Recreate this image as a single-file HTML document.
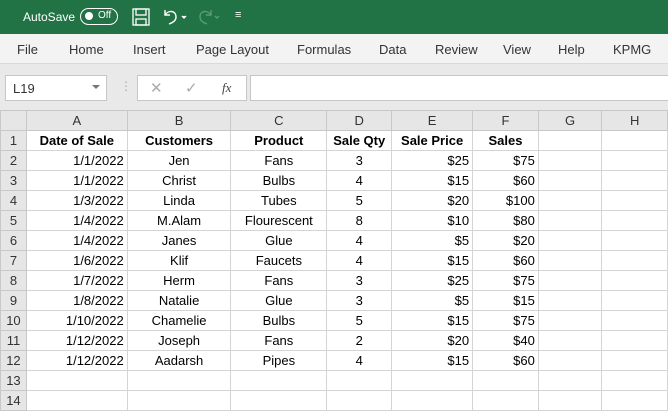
<!DOCTYPE html>
<html><head><style>
*{margin:0;padding:0;box-sizing:border-box}
body{width:668px;height:411px;overflow:hidden;font-family:"Liberation Sans",Arial,sans-serif;background:#fff;position:relative}
.green{position:absolute;left:0;top:0;width:668px;height:34px;background:#217346;color:#fff}
.rib{position:absolute;left:0;top:34px;width:668px;height:30px;background:#f3f3f3;border-bottom:1px solid #dadada;font-size:13px;color:#333}
.rib span{position:absolute;top:8px}
.fb{position:absolute;left:0;top:64px;width:668px;height:46px;background:#e9e9e9}
.box{position:absolute;background:#fff;border:1px solid #c6c6c6}
table{position:absolute;left:0;top:110px;border-collapse:collapse;font-size:13px;table-layout:fixed}
td{height:20px;border:1px solid #d4d4d4;padding:0 3px;white-space:nowrap;overflow:hidden;color:#000}
tr.h td{background:#e6e6e6;text-align:center;color:#333;border-color:#c8c8c8}
td.r{background:#e6e6e6;color:#333;text-align:center;padding:0;border-color:#c8c8c8}
.c{text-align:center}.R{text-align:right}.b{font-weight:bold;text-align:center}
</style></head><body>
<div class="green">
<span style="position:absolute;left:23px;top:10px;font-size:12px">AutoSave</span>
<div style="position:absolute;left:80px;top:8px;width:38px;height:17px;border:1.5px solid #fff;border-radius:9px"><div style="position:absolute;left:4px;top:3px;width:8px;height:8px;border-radius:50%;background:#fff"></div><span style="position:absolute;left:17px;top:1px;font-size:10px">Off</span></div>
<svg style="position:absolute;left:132px;top:8px" width="18" height="18" viewBox="0 0 18 18" fill="none" stroke="#fff" stroke-width="1.3"><rect x="1" y="1" width="16" height="16"/><rect x="4" y="1" width="10" height="6"/><rect x="4" y="11" width="10" height="6"/></svg>
<svg style="position:absolute;left:162px;top:8px" width="26" height="18" viewBox="0 0 26 18" fill="none" stroke="#fff" stroke-width="1.4"><path d="M3 2v5h5M3 7c3-5 11-5 11 2c0 4-4 6-7 7"/><path d="M20 8l2 2l2-2" fill="#fff"/></svg>
<svg style="position:absolute;left:197px;top:8px" width="26" height="18" viewBox="0 0 26 18" fill="none" stroke="#5a9a78" stroke-width="1.4"><path d="M14 2v5h-5M14 7c-3-5-11-5-11 2c0 4 4 6 7 7"/><path d="M18 8l2 2l2-2"/></svg>
<span style="position:absolute;left:235px;top:9px;font-size:11px">&#8801;</span>
</div>
<div class="rib">
<span style="left:17px">File</span><span style="left:69px">Home</span><span style="left:133px">Insert</span><span style="left:196px">Page Layout</span><span style="left:297px">Formulas</span><span style="left:379px">Data</span><span style="left:435px">Review</span><span style="left:503px">View</span><span style="left:558px">Help</span><span style="left:613px">KPMG</span>
</div>
<div class="fb">
<div class="box" style="left:5px;top:11px;width:102px;height:26px;font-size:13px;padding:5px 0 0 7px;color:#333">L19<span style="position:absolute;right:6px;top:9px;border:4px solid transparent;border-top:4px solid #777"></span></div>
<span style="position:absolute;left:120px;top:15px;color:#aaa;font-size:12px">&#8942;</span>
<div class="box" style="left:137px;top:11px;width:110px;height:26px;color:#aaa;font-size:15px"><span style="position:absolute;left:12px;top:3px">&#10005;</span><span style="position:absolute;left:47px;top:3px">&#10003;</span><span style="position:absolute;left:84px;top:4px;color:#444;font-style:italic;font-family:'Liberation Serif',serif;font-size:13px">fx</span></div>
<div class="box" style="left:250px;top:11px;width:420px;height:26px"></div>
</div>
<table>
<colgroup><col style="width:26px"><col style="width:101px"><col style="width:104px"><col style="width:96px"><col style="width:65px"><col style="width:81px"><col style="width:66px"><col style="width:64px"><col style="width:66px"></colgroup>
<tr class="h"><td style="background:#e6e6e6"></td><td>A</td><td>B</td><td>C</td><td>D</td><td>E</td><td>F</td><td>G</td><td>H</td></tr>
<tr><td class="r">1</td><td class="b">Date of Sale</td><td class="b">Customers</td><td class="b">Product</td><td class="b">Sale Qty</td><td class="b">Sale Price</td><td class="b">Sales</td><td></td><td></td></tr>
<tr><td class="r">2</td><td class="R">1/1/2022</td><td class="c">Jen</td><td class="c">Fans</td><td class="c">3</td><td class="R">$25</td><td class="R">$75</td><td></td><td></td></tr>
<tr><td class="r">3</td><td class="R">1/1/2022</td><td class="c">Christ</td><td class="c">Bulbs</td><td class="c">4</td><td class="R">$15</td><td class="R">$60</td><td></td><td></td></tr>
<tr><td class="r">4</td><td class="R">1/3/2022</td><td class="c">Linda</td><td class="c">Tubes</td><td class="c">5</td><td class="R">$20</td><td class="R">$100</td><td></td><td></td></tr>
<tr><td class="r">5</td><td class="R">1/4/2022</td><td class="c">M.Alam</td><td class="c">Flourescent</td><td class="c">8</td><td class="R">$10</td><td class="R">$80</td><td></td><td></td></tr>
<tr><td class="r">6</td><td class="R">1/4/2022</td><td class="c">Janes</td><td class="c">Glue</td><td class="c">4</td><td class="R">$5</td><td class="R">$20</td><td></td><td></td></tr>
<tr><td class="r">7</td><td class="R">1/6/2022</td><td class="c">Klif</td><td class="c">Faucets</td><td class="c">4</td><td class="R">$15</td><td class="R">$60</td><td></td><td></td></tr>
<tr><td class="r">8</td><td class="R">1/7/2022</td><td class="c">Herm</td><td class="c">Fans</td><td class="c">3</td><td class="R">$25</td><td class="R">$75</td><td></td><td></td></tr>
<tr><td class="r">9</td><td class="R">1/8/2022</td><td class="c">Natalie</td><td class="c">Glue</td><td class="c">3</td><td class="R">$5</td><td class="R">$15</td><td></td><td></td></tr>
<tr><td class="r">10</td><td class="R">1/10/2022</td><td class="c">Chamelie</td><td class="c">Bulbs</td><td class="c">5</td><td class="R">$15</td><td class="R">$75</td><td></td><td></td></tr>
<tr><td class="r">11</td><td class="R">1/12/2022</td><td class="c">Joseph</td><td class="c">Fans</td><td class="c">2</td><td class="R">$20</td><td class="R">$40</td><td></td><td></td></tr>
<tr><td class="r">12</td><td class="R">1/12/2022</td><td class="c">Aadarsh</td><td class="c">Pipes</td><td class="c">4</td><td class="R">$15</td><td class="R">$60</td><td></td><td></td></tr>
<tr><td class="r">13</td><td></td><td></td><td></td><td></td><td></td><td></td><td></td><td></td></tr>
<tr><td class="r">14</td><td></td><td></td><td></td><td></td><td></td><td></td><td></td><td></td></tr>
</table>
</body></html>
